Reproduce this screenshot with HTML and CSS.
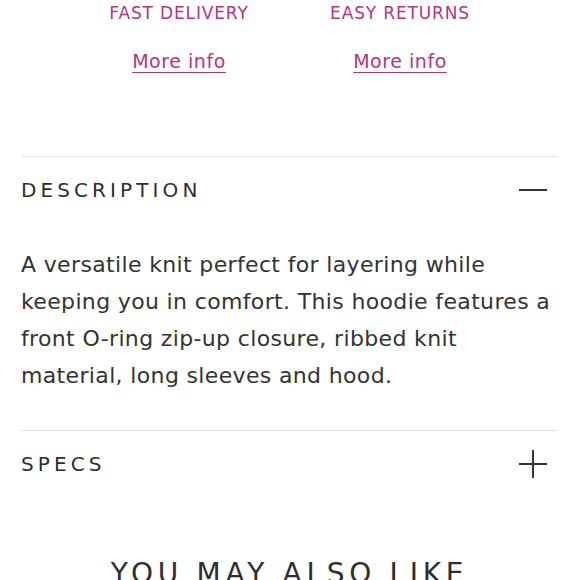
FILE: index.html
```html
<!DOCTYPE html>
<html>
<head>
<meta charset="utf-8">
<link rel="stylesheet" href="styles.css">
</head>
<body>
<div class="page">
  <div class="perks">
    <div class="perk">
      <div class="perk-title">FAST DELIVERY</div>
      <a class="perk-link" href="#">More info</a>
    </div>
    <div class="perk">
      <div class="perk-title">EASY RETURNS</div>
      <a class="perk-link" href="#">More info</a>
    </div>
  </div>

  <section class="acc acc-open">
    <div class="acc-head">
      <span class="acc-title">DESCRIPTION</span>
      <svg class="acc-icon" width="30" height="30" viewBox="0 0 30 30"><path d="M1 15H29" stroke="#333" stroke-width="2"/></svg>
    </div>
    <p class="acc-body">A versatile knit perfect for layering while keeping you in comfort. This hoodie features a front O-ring zip-up closure, ribbed knit material, long sleeves and hood.</p>
  </section>

  <section class="acc acc-last">
    <div class="acc-head">
      <span class="acc-title">SPECS</span>
      <svg class="acc-icon" width="30" height="30" viewBox="0 0 30 30"><path d="M1 15H29M15 1V29" stroke="#333" stroke-width="2"/></svg>
    </div>
  </section>

  <h2 class="also">YOU MAY ALSO LIKE</h2>
</div>
</body>
</html>
```

FILE: styles.css
```css
html, body {
  margin: 0;
  padding: 0;
  background: #fff;
}
body {
  font-family: "DejaVu Sans", sans-serif;
  color: #333;
}
.page {
  padding: 0 21px;
}
.perks {
  display: flex;
  justify-content: center;
  padding-top: 2px;
  height: 156px;
  box-sizing: border-box;
}
.perk {
  width: 221px;
  display: flex;
  flex-direction: column;
  align-items: center;
}
.perk-title {
  color: #b5357a;
  font-size: 17px;
  letter-spacing: 0.85px;
  line-height: 22px;
}
.perk-link {
  margin-top: 25px;
  color: #b5357a;
  font-size: 19px;
  letter-spacing: 0.55px;
  line-height: 24px;
  text-decoration: underline;
  text-underline-offset: 4px;
  text-decoration-thickness: 1px;
}
.acc {
  border-top: 1px solid #e3e3e3;
}
.acc-head {
  display: flex;
  justify-content: space-between;
  align-items: center;
  height: 66px;
  padding-right: 10px;
}
.acc-title {
  font-size: 20px;
  letter-spacing: 4.1px;
  color: #2e2e2e;
}
.acc-icon {
  display: block;
}
.acc-body {
  margin: 0;
  padding: 23px 0 36px;
  font-size: 22px;
  letter-spacing: 0.35px;
  line-height: 37px;
  color: #333;
}
.acc-last {
  height: 106px;
}
.also {
  margin: 20px 0 0;
  text-align: center;
  font-weight: normal;
  font-size: 28px;
  letter-spacing: 4.7px;
  color: #2e2e2e;
}
```
